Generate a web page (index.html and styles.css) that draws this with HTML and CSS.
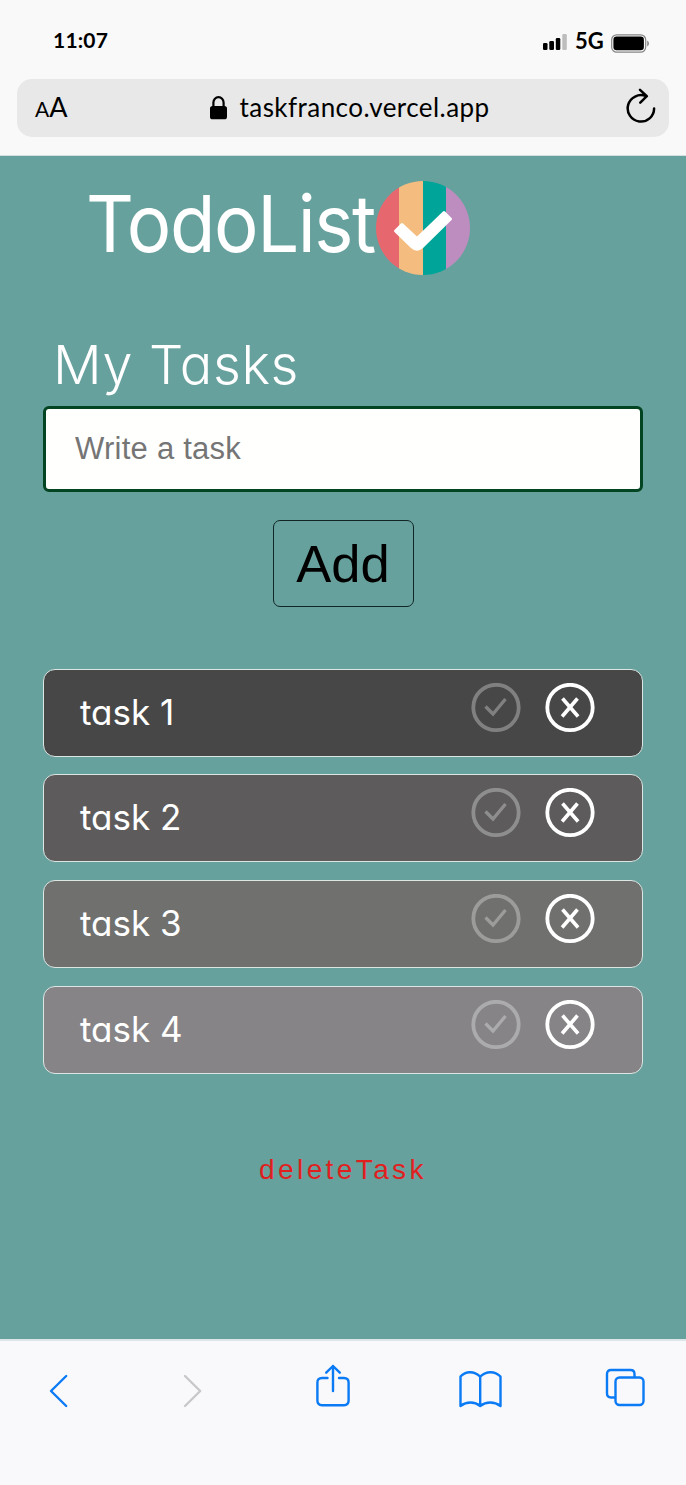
FILE: index.html
```html
<!DOCTYPE html>
<html lang="en">
<head>
<meta charset="utf-8">
<title>TodoList</title>
<link rel="stylesheet" href="styles.css">
</head>
<body>
<header class="browser-top">
  <div class="status">
    <span class="time">11:07</span>
    <div class="indicators">
      <svg class="signal" width="24" height="17" viewBox="0 0 24 17"><rect y="9" width="4.5" height="7" rx="1.3"/><rect x="6.3" y="7" width="4.7" height="9" rx="1.3"/><rect x="12.8" y="4" width="4.5" height="12" rx="1.3"/><rect x="19.3" width="4.5" height="16" rx="1.3" fill="#bdbdbd"/></svg>
      <span class="network">5G</span>
      <svg class="battery" width="38" height="19" viewBox="0 0 38 19"><rect x=".7" y=".8" width="34" height="17.4" rx="5" fill="none" stroke="#858585" stroke-width="1.2"/><rect x="2.4" y="2.6" width="30.5" height="13.6" rx="3.3"/><path d="M36.2 6.5q1.8 1 1.8 3t-1.8 3z" fill="#8b8b8b"/></svg>
    </div>
  </div>
  <div class="address-bar">
    <span class="text-size"><small>A</small>A</span>
    <div class="address">
      <svg width="17" height="24" viewBox="0 0 17 24"><rect y="10" width="17" height="13.3" rx="2.6"/><path d="M3.4 11V6.600a5.100 5.400 0 0 1 10.200 0V11" fill="none" stroke="#000" stroke-width="2.200"/></svg>
      <span class="url">taskfranco.vercel.app</span>
    </div>
    <svg class="reload" width="30" height="36" viewBox="0 0 30 36"><path d="M28.100 20.400A13.200 13.200 0 1 1 20 8.200M14 1.800l6.800 6.400-6.500 6.500" fill="none" stroke="#000" stroke-width="2.500" stroke-linecap="round" stroke-linejoin="round"/></svg>
  </div>
</header>
<main class="app">
  <div class="brand">
    <h1 class="brand-name">TodoList</h1>
    <svg class="logo" width="94" height="94" viewBox="0 0 94 94">
      <clipPath id="disc"><circle cx="47" cy="47" r="47"/></clipPath>
      <g clip-path="url(#disc)"><path fill="#e7676f" d="M0 0h23v94H0z"/><path fill="#f4bd7f" d="M23 0h24v94H23z"/><path fill="#00a499" d="M47 0h23v94H47z"/><path fill="#bd8dbf" d="M70 0h24v94H70z"/></g>
      <path d="M19.500 50L26 43.500L41 57.500L68 31.500L74.500 38L46 66Q41 70.500 36 66z" fill="#fff" stroke="#fff" stroke-width="3" stroke-linejoin="round"/>
    </svg>
  </div>
  <h2 class="heading">My Tasks</h2>
  <input class="task-input" type="text" placeholder="Write a task" aria-label="Task">
  <button class="add">Add</button>
  <ul class="tasks">
    <li class="task shade-1"><span class="label">task 1</span><svg class="actions" width="124" height="50" viewBox="0 0 124 50"><use href="#done"/><use href="#remove"/></svg></li>
    <li class="task shade-2"><span class="label">task 2</span><svg class="actions" width="124" height="50" viewBox="0 0 124 50"><use href="#done"/><use href="#remove"/></svg></li>
    <li class="task shade-3"><span class="label">task 3</span><svg class="actions" width="124" height="50" viewBox="0 0 124 50"><use href="#done"/><use href="#remove"/></svg></li>
    <li class="task shade-4"><span class="label">task 4</span><svg class="actions" width="124" height="50" viewBox="0 0 124 50"><use href="#done"/><use href="#remove"/></svg></li>
  </ul>
  <button class="delete">deleteTask</button>
</main>
<nav class="toolbar">
  <svg class="back" width="19" height="46" viewBox="0 0 19 46"><path d="M17.200 12L2 27l15.200 15"/></svg>
  <svg class="forward" width="19" height="46" viewBox="0 0 19 46"><path d="M2 12l15.200 15L2 42"/></svg>
  <svg class="share" width="34" height="46" viewBox="0 0 34 46"><path d="M11.500 14H6q-4.600 0-4.600 4.600v18q0 4.600 4.600 4.600h22q4.600 0 4.600-4.600v-18Q32.600 14 28 14h-5M17 27V2M10.200 8.700L17 2l6.800 6.700"/></svg>
  <svg class="bookmarks" width="43" height="46" viewBox="0 0 43 46"><path d="M21.200 12.700C15 6.500 6.500 7 1.500 12.500V42c6-4.600 14-4.600 19.700 0 6-4.600 14-4.600 20.300 0V12.500C36 7 27.500 6.500 21.200 12.700V42"/></svg>
  <svg class="tabs" width="40" height="46" viewBox="0 0 40 46"><rect x="10.500" y="13.500" width="28" height="27.500" rx="4"/><path d="M10 33.500H6q-4 0-4-4V10q0-4 4-4h19.500q4 0 4 4v3"/></svg>
</nav>
<svg class="symbols" width="0" height="0">
  <defs>
    <g id="done" fill="none" stroke="#fff" opacity=".31"><circle cx="25" cy="24.500" r="22.700" stroke-width="3.800"/><path d="M14.500 23.500l7.500 7.500L34.500 16" stroke-width="3.300"/></g>
    <g id="remove" fill="none" stroke="#fff"><circle cx="99" cy="24.500" r="22.700" stroke-width="3.800"/><path d="M91.500 15.500l15.600 18M106.500 15.500L91.100 33.500" stroke-width="3.600"/></g>
  </defs>
</svg>
</body>
</html>
```
FILE: styles.css
```css
* { box-sizing: border-box; }
body { margin: 0; width: 686px; height: 1485px; display: flex; flex-direction: column; overflow: hidden; background: #67a19d; color: #fff; }
svg { display: block; flex: none; }
h1, h2, ul { margin: 0; padding: 0; font-weight: 400; }
.browser-top { height: 156px; flex: none; background: #f9f9f9; color: #000; font-family: Lato, sans-serif; border-bottom: 1px solid #d3e0df; }
.status { height: 79px; display: flex; justify-content: space-between; padding: 26px 37px 0 53px; }
.time { font-size: 21px; line-height: 27px; font-weight: 700; letter-spacing: .2px; }
.indicators { display: flex; align-items: flex-start; }
.signal { margin-top: 8px; }
.network { font-size: 22px; line-height: 30px; font-weight: 700; margin: 0 6px 0 8px; width: 30px; }
.battery { margin-top: 8px; }
.address-bar { height: 58px; margin: 0 17px; padding: 0 13px 0 18px; border-radius: 15px; background: #e8e8e8; display: flex; align-items: center; justify-content: space-between; }
.text-size { font-size: 27px; line-height: 56px; width: 36px; white-space: nowrap; }
.text-size small { font-size: 21px; }
.address { display: flex; align-items: center; gap: 13px; width: 282px; margin-left: 4px; }
.url { font-size: 26px; line-height: 54px; padding-bottom: 2px; letter-spacing: .45px; white-space: nowrap; }
.reload { margin-bottom: 4px; }
.app { height: 1183px; flex: none; display: flex; flex-direction: column; align-items: center; padding: 25px 43px 0; }
.brand { align-self: flex-start; display: flex; margin-left: 43px; height: 94px; }
.brand-name { width: 290px; font: 400 79px/84px Inter, sans-serif; letter-spacing: -1.500px; white-space: nowrap; transform: scaleX(.94); transform-origin: 2px 0; }
.heading { align-self: flex-start; margin: 53px 0 0 10px; height: 78px; font: 300 54px/74px Inter, sans-serif; font-feature-settings: "cv11"; letter-spacing: .65px; white-space: nowrap; }
.task-input { width: 600px; height: 86px; flex: none; border: 3px solid #034522; border-radius: 6px; padding: 0 29px; background: #fffffe; font: 31px "Liberation Sans", sans-serif; letter-spacing: .25px; outline: none; }
.task-input::placeholder { color: #757575; opacity: 1; }
.add { width: 141px; height: 87px; flex: none; margin-top: 28px; padding: 0; border: 1px solid #102524; border-radius: 7px; background: none; color: #000; font: 52.500px "Liberation Sans", sans-serif; }
.tasks { width: 100%; margin-top: 61.800px; display: grid; gap: 17.600px; list-style: none; }
.task { height: 88px; display: flex; justify-content: space-between; padding: 13px 47px 0 36px; border: 1px solid #dce7e4; border-radius: 12px; }
.shade-1 { background: #484747; }
.shade-2 { background: #5d5b5c; }
.shade-3 { background: #70706e; }
.shade-4 { background: #868487; }
.label { font: 400 35px/58px Inter, sans-serif; font-feature-settings: "cv11"; white-space: nowrap; }
.delete { margin-top: 76px; padding: 0; border: 0; background: none; color: #e01f1f; font: 28px/40px "Liberation Sans", sans-serif; letter-spacing: 3.400px; }
.toolbar { height: 146px; flex: none; display: flex; align-items: flex-start; padding: 23px 0 0 49px; background: #f9f9fb; border-top: 2px solid #dce5e7; fill: none; stroke: #0b7af5; stroke-width: 2.400; stroke-linecap: round; stroke-linejoin: round; }
.forward { margin-left: 115px; stroke: #c8c8cb; }
.share { margin-left: 114px; }
.bookmarks { margin-left: 108.500px; }
.tabs { margin-left: 103.500px; }
.symbols { position: absolute; }
```
